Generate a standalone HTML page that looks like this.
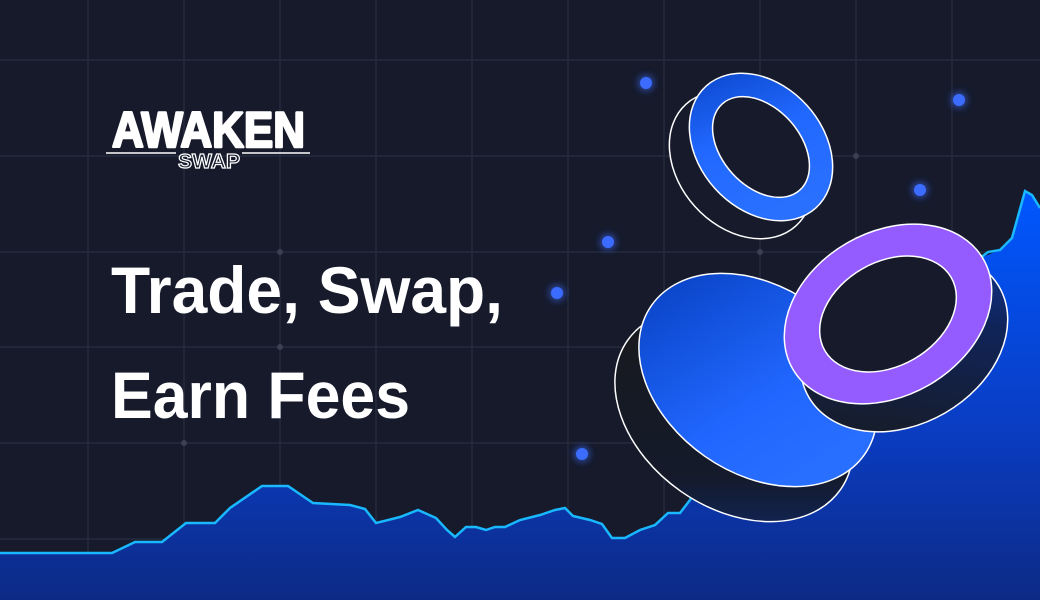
<!DOCTYPE html>
<html><head><meta charset="utf-8"><style>
html,body{margin:0;padding:0;background:#161a2b;}
svg{display:block}
</style></head><body>
<svg width="1040" height="600" viewBox="0 0 1040 600" xmlns="http://www.w3.org/2000/svg">
<defs>
<linearGradient id="area" x1="0" y1="0" x2="0" y2="1">
<stop offset="0" stop-color="#0057ff"/><stop offset="0.6" stop-color="#0a3cc0"/><stop offset="1" stop-color="#0d2a85"/>
</linearGradient>
<linearGradient id="blueface" x1="0" y1="0.3" x2="1" y2="0.6">
<stop offset="0" stop-color="#0a45c8"/><stop offset="0.6" stop-color="#2167ff"/><stop offset="1" stop-color="#2a70ff"/>
</linearGradient>
<linearGradient id="ringblue" x1="0" y1="0" x2="1" y2="0.3">
<stop offset="0" stop-color="#0a45c8"/><stop offset="0.5" stop-color="#2168ff"/><stop offset="1" stop-color="#2a70ff"/>
</linearGradient>
<linearGradient id="sidedark" x1="0" y1="0" x2="1" y2="1">
<stop offset="0" stop-color="#1a1a1a"/><stop offset="0.7" stop-color="#141a2a"/><stop offset="1" stop-color="#0f2a70"/>
</linearGradient>
<linearGradient id="sidenavy" x1="0" y1="1" x2="1" y2="0">
<stop offset="0" stop-color="#181a1c"/><stop offset="0.6" stop-color="#10245a"/><stop offset="1" stop-color="#0d3aa0"/>
</linearGradient>
<filter id="glow" x="-2" y="-2" width="5" height="5"><feGaussianBlur stdDeviation="4"/></filter>
</defs>
<rect width="1040" height="600" fill="#161a2b"/>
<g stroke="#252a3d" stroke-width="1.5">
<line x1="88" y1="0" x2="88" y2="600"/><line x1="184" y1="0" x2="184" y2="600"/><line x1="280" y1="0" x2="280" y2="600"/><line x1="376" y1="0" x2="376" y2="600"/><line x1="472" y1="0" x2="472" y2="600"/><line x1="568" y1="0" x2="568" y2="600"/><line x1="664" y1="0" x2="664" y2="600"/><line x1="760" y1="0" x2="760" y2="600"/><line x1="856" y1="0" x2="856" y2="600"/><line x1="952" y1="0" x2="952" y2="600"/>
<line x1="0" y1="60" x2="1040" y2="60"/><line x1="0" y1="156" x2="1040" y2="156"/><line x1="0" y1="252" x2="1040" y2="252"/><line x1="0" y1="347" x2="1040" y2="347"/><line x1="0" y1="443" x2="1040" y2="443"/><line x1="0" y1="539" x2="1040" y2="539"/>
</g>
<g fill="#3a3f52"><circle cx="856" cy="156" r="3"/><circle cx="280" cy="252" r="3"/><circle cx="760" cy="252" r="3"/><circle cx="280" cy="347" r="3"/><circle cx="184" cy="443" r="3"/></g>
<path d="M0,553 L112,553 L135,542 L162,542 L186,523 L215,523 L230,508 L262,486 L288,486 L313,503 L350,505 L365,509 L376,523 L400,517 L418,510 L436,518 L447,530 L455,537 L466,527 L476,527 L486,530 L495,527 L505,527 L520,520 L540,515 L555,510 L565,508 L573,516 L590,520 L602,524 L612,538 L625,538 L640,530 L655,525 L668,513 L680,513 L690,500 L750,440 L900,330 L980,258 L1000,250 L1012,238 L1025,191 L1032,195 L1040,208 L1040,600 L0,600 Z" fill="url(#area)"/>
<path d="M0,553 L112,553 L135,542 L162,542 L186,523 L215,523 L230,508 L262,486 L288,486 L313,503 L350,505 L365,509 L376,523 L400,517 L418,510 L436,518 L447,530 L455,537 L466,527 L476,527 L486,530 L495,527 L505,527 L520,520 L540,515 L555,510 L565,508 L573,516 L590,520 L602,524 L612,538 L625,538 L640,530 L655,525 L668,513 L680,513 L690,500 L700,480" fill="none" stroke="#19b8ff" stroke-width="2.5"/>
<path d="M975,262 L988,252 L1000,250 L1012,238 L1025,191 L1032,195 L1040,208" fill="none" stroke="#19b8ff" stroke-width="2.5"/>
<g fill="#3b6cff">
<g filter="url(#glow)" opacity="0.8"><circle cx="646" cy="83" r="7"/><circle cx="959" cy="100" r="7"/><circle cx="920" cy="190" r="7"/><circle cx="608" cy="242" r="7"/><circle cx="557" cy="293" r="7"/><circle cx="582" cy="454" r="7"/></g>
<circle cx="646" cy="83" r="6"/><circle cx="959" cy="100" r="6"/><circle cx="920" cy="190" r="6"/><circle cx="608" cy="242" r="6"/><circle cx="557" cy="293" r="6"/><circle cx="582" cy="454" r="6"/>
</g>
<g transform="translate(741,165) rotate(48)"><ellipse cx="0" cy="0" rx="82" ry="62" fill="#161a2b" stroke="#fff" stroke-width="1.5"/></g>
<g transform="translate(761,147) rotate(48)"><ellipse cx="0" cy="0" rx="82" ry="62" fill="url(#ringblue)" stroke="#fff" stroke-width="1.5"/><ellipse cx="0" cy="0" rx="58" ry="39" fill="#161a2b" stroke="#fff" stroke-width="1.5"/></g>
<g transform="translate(734,415) rotate(35)"><ellipse cx="0" cy="0" rx="130" ry="93" fill="url(#sidedark)" stroke="#fff" stroke-width="1.5"/></g>
<g transform="translate(758,380) rotate(35)"><ellipse cx="0" cy="0" rx="130" ry="93" fill="url(#blueface)" stroke="#fff" stroke-width="1.5"/></g>
<g transform="translate(904,342) rotate(-30)"><ellipse cx="0" cy="0" rx="110" ry="82" fill="url(#sidenavy)" stroke="#fff" stroke-width="1.5"/></g>
<g transform="translate(888,314) rotate(-30)"><ellipse cx="0" cy="0" rx="110" ry="82" fill="#945cff" stroke="#fff" stroke-width="1.5"/><ellipse cx="0" cy="0" rx="73" ry="52" fill="#161a2b" stroke="#fff" stroke-width="1.5"/></g>
<text x="112" y="147" font-family="Liberation Sans, sans-serif" font-weight="bold" font-size="50" fill="#fff" stroke="#fff" stroke-width="2.5" stroke-linejoin="round" textLength="193" lengthAdjust="spacingAndGlyphs">AWAKEN</text>
<line x1="106" y1="153" x2="176" y2="153" stroke="#fff" stroke-width="1.5"/>
<line x1="242" y1="153" x2="310" y2="153" stroke="#fff" stroke-width="1.5"/>
<text x="178" y="168" font-family="Liberation Sans, sans-serif" font-weight="bold" font-size="20" fill="#161a2b" stroke="#fff" stroke-width="1.2" textLength="62" lengthAdjust="spacingAndGlyphs">SWAP</text>
<text x="111" y="313" font-family="Liberation Sans, sans-serif" font-weight="bold" font-size="66" fill="#fff" textLength="392" lengthAdjust="spacingAndGlyphs">Trade, Swap,</text>
<text x="111" y="418" font-family="Liberation Sans, sans-serif" font-weight="bold" font-size="66" fill="#fff" textLength="299" lengthAdjust="spacingAndGlyphs">Earn Fees</text>
</svg>
</body></html>
